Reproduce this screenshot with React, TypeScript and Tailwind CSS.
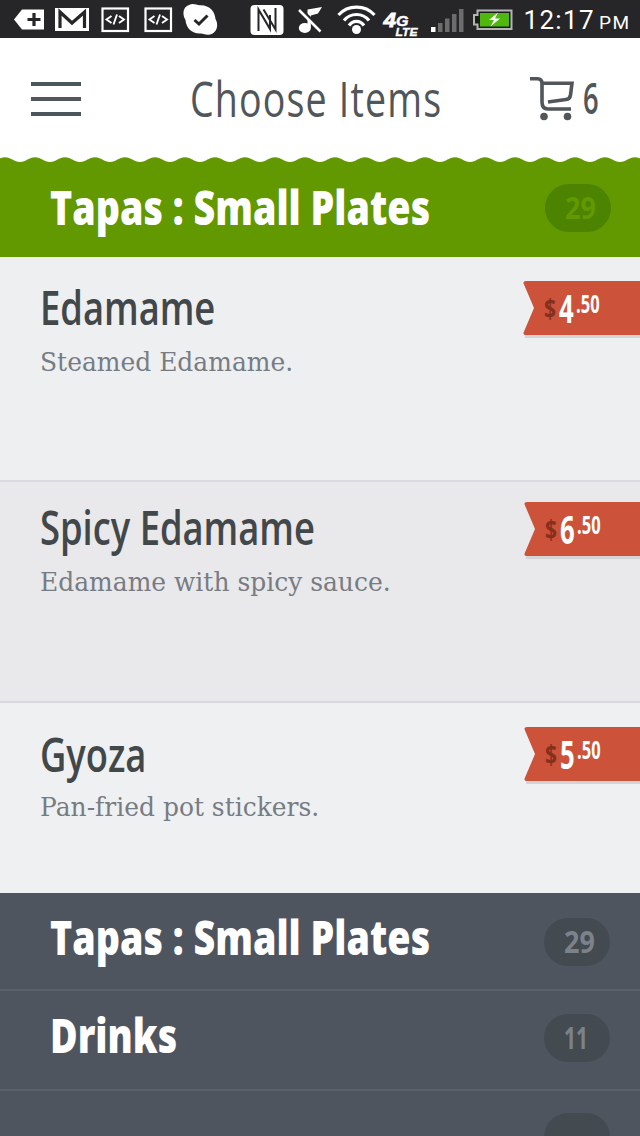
import React from "react";

const sans = "font-['Open_Sans','Noto_Sans',sans-serif]";

function StatusBar() {
  return (
    <div className="h-[38px] w-full shrink-0 bg-[#262527]">
      <svg width="640" height="38" viewBox="0 0 640 38" fill="#fff" className="block">
        <path d="M14 19.500L22 9.500H44V29.500H22Z" />
        <path d="M34 13V26M27.500 19.500H40.500" stroke="#262527" strokeWidth="3.200" />
        <rect x="55" y="8" width="34" height="23" />
        <path d="M60 28V12L72 23L84.500 12V28" fill="none" stroke="#262527" strokeWidth="3.200" />
        {[101.500, 144.500].map((x) => (
          <g key={x} transform={`translate(${x} 7.5)`} fill="none" stroke="#fff">
            <rect x="1" y="1" width="25.500" height="22.500" strokeWidth="2.200" />
            <path d="M10 8.500L5 12L10 15.500M17.500 8.500L22.500 12L17.500 15.500M15.500 7L12 17" strokeWidth="1.900" />
          </g>
        ))}
        <path d="M189 5C193 3 196 5 200 5.300C210 5 215 12 215.500 19C219 25 217 33 210 34.500C206 35.500 204 33.500 201 33.500C192 34 186 28 185.500 20C182 14 183 7 189 5Z" />
        <path d="M194.500 20L199 24L207.500 15.500" fill="none" stroke="#262527" strokeWidth="3" />
        <rect x="250.500" y="5" width="33" height="30" rx="4" />
        <path d="M258.500 31V9.500L270 29V15M275.500 8V29.500L263.500 9.500" fill="none" stroke="#262527" strokeWidth="2" />
        <ellipse cx="304.800" cy="28" rx="6" ry="5" />
        <path d="M307.500 27V9.500L322 7L318 13.500L310.800 15.500V28Z" />
        <path d="M301 9.500L323.500 31" stroke="#262527" strokeWidth="3" />
        <path d="M299 10L320.500 31.500" stroke="#fff" strokeWidth="2.500" />
        <g fill="none" stroke="#fff" strokeWidth="3.200">
          <path d="M338.500 15C348 4.500 365 4.500 374.500 15" />
          <path d="M344 20.500C350.500 12.500 362.500 12.500 369 20.500" />
          <path d="M349 25.500C353 20 360 20 364 25.500" />
        </g>
        <circle cx="356.500" cy="29.500" r="4.500" />
        <g fontFamily="Liberation Sans, sans-serif" fontWeight="700" fontStyle="italic" stroke="#fff">
          <text x="383.500" y="26.500" fontSize="20" strokeWidth="0.800" textLength="12.500" lengthAdjust="spacingAndGlyphs">4</text>
          <text x="396" y="26" fontSize="14.500" strokeWidth="0.500" textLength="12.500" lengthAdjust="spacingAndGlyphs">G</text>
          <text x="395.500" y="35.500" fontSize="10.500" strokeWidth="0.300" textLength="22" lengthAdjust="spacingAndGlyphs">LTE</text>
        </g>
        <rect x="431" y="27" width="4.500" height="5" />
        <g fill="#6d6c6d">
          <rect x="438" y="23" width="4.500" height="9" />
          <rect x="445" y="18.500" width="4.500" height="13.500" />
          <rect x="452" y="14" width="4.500" height="18" />
          <rect x="459" y="9" width="4.500" height="23" />
        </g>
        <path d="M477.500 10.500H511.500V29H477.500V24.500H474V15H477.500Z" fill="#1c1c1c" stroke="#b4b4b4" strokeWidth="2" />
        <rect x="480" y="13" width="29" height="13.500" fill="#4fb80e" />
        <path d="M498 12.500L489 20H494L490.500 26.500L500 18.500H495Z" />
        <g fontFamily="Roboto, sans-serif">
          <text x="523.500" y="29" fontSize="26" textLength="70" lengthAdjust="spacing">12:17</text>
          <text x="599" y="29" fontSize="19" textLength="30" lengthAdjust="spacing">PM</text>
        </g>
      </svg>
    </div>
  );
}

function Header() {
  return (
    <header className="flex h-[119px] w-full shrink-0 items-start bg-white text-[#50565a]">
      <div className="mt-[44px] ml-[31px] flex w-[50px] flex-col gap-[11px]">
        <span className="h-1 bg-[#4b565c]" />
        <span className="h-1 bg-[#50565a]" />
        <span className="h-1 bg-[#4b565c]" />
      </div>
      <h1 className={`${sans} mt-[36px] ml-[109px] w-[339px] origin-left scale-x-[0.767] text-[49px] leading-none tracking-[1.5px] whitespace-nowrap`}>
        Choose Items
      </h1>
      <svg width="48" height="48" viewBox="0 0 48 48" className="mt-[37px] shrink-0" fill="none" stroke="#50565a" strokeWidth="3.600">
        <path d="M1 3.800H8.500Q13 4 13 8.500V27Q13 34 19 34H42" />
        <path d="M13 8.200H43L41.500 20Q41 24 37 24.500L19 27" />
        <circle cx="15" cy="41.500" r="3.800" fill="#50565a" stroke="none" />
        <circle cx="38.500" cy="41.500" r="3.800" fill="#50565a" stroke="none" />
      </svg>
      <span className={`${sans} mt-[37px] ml-[6px] w-4 origin-left scale-x-[0.62] text-[44px] leading-none font-semibold`}>6</span>
    </header>
  );
}

function Wave() {
  return (
    <svg width="640" height="6" viewBox="0 0 640 6" className="absolute top-0 left-0">
      <defs>
        <pattern id="scallop" width="30" height="6" patternUnits="userSpaceOnUse" x="5">
          <path d="M0 0.300C6 0.300 9 5 15 5S24 0.300 30 0.300V0H0Z" fill="#fff" />
        </pattern>
      </defs>
      <rect width="640" height="6" fill="url(#scallop)" />
    </svg>
  );
}

type BandProps = { title: string; count: string; row: string; heading: string; badge: string; digits: string; wavy?: boolean };

function Band({ title, count, row, heading, badge, digits, wavy }: BandProps) {
  return (
    <div className={`relative flex w-full shrink-0 items-start overflow-hidden ${row}`}>
      {wavy && <Wave />}
      <h2 className={`${sans} ml-[50px] w-[494px] origin-left scale-x-[0.802] text-[47px] leading-none font-extrabold whitespace-nowrap text-white ${heading}`}>
        {title}
      </h2>
      <span className={`${sans} flex h-[48px] w-[66px] items-center rounded-[24px] pl-5 text-[30px] leading-none font-bold ${badge}`}>
        <span className={`block origin-left ${digits}`}>{count}</span>
      </span>
    </div>
  );
}

function PriceTag({ whole, cents }: { whole: string; cents: string }) {
  return (
    <div className="relative h-[58px] w-[117px]">
      <svg width="117" height="58" viewBox="0 0 117 58" className="absolute inset-0">
        <path d="M2 57H117V54H2Z" fill="#d5d5d7" />
        <path d="M3 0H117V54H3Q-0.500 54 0.800 51L11 27L0.800 3Q-0.500 0 3 0Z" fill="#cc523a" />
      </svg>
      <div className={`${sans} relative flex items-start leading-none font-bold text-white`}>
        <span className="mt-[13px] ml-[21px] w-[15px] origin-left scale-x-[0.78] text-[27px] leading-none text-[#85301f]">$</span>
        <span className="mt-[7px] w-[17px] origin-left scale-x-[0.66] text-[39px] leading-none">{whole}</span>
        <span className="mt-[10px] origin-left scale-x-[0.66] text-[25px] leading-none">{cents}</span>
      </div>
    </div>
  );
}

type DishProps = { name: string; text: string; whole: string; cents: string; row: string; title: string; desc: string; tag: string };

function Dish({ name, text, whole, cents, row, title, desc, tag }: DishProps) {
  return (
    <article className={`flex w-full shrink-0 items-start overflow-hidden ${row}`}>
      <div className="ml-[40px] w-[483px] shrink-0">
        <h3 className={`${sans} origin-left scale-x-[0.773] text-[47px] leading-none font-semibold whitespace-nowrap text-[#42474a] ${title}`}>{name}</h3>
        <p className={`origin-left scale-x-[0.96] font-['DejaVu_Serif',serif] text-[26px] leading-none whitespace-nowrap text-[#777c83] ${desc}`}>{text}</p>
      </div>
      <div className={`shrink-0 ${tag}`}>
        <PriceTag whole={whole} cents={cents} />
      </div>
    </article>
  );
}

export default function App() {
  return (
    <main className="flex h-[1136px] w-[640px] flex-col overflow-hidden bg-[#4f555f]">
      <StatusBar />
      <Header />
      <Band wavy title="Tapas : Small Plates" count="29" row="h-[100px] bg-[#629800]" heading="mt-[27px]" badge="mt-[27px] ml-px bg-[#4c8300] text-[#629800]" digits="scale-x-[0.9]" />
      <Dish name="Edamame" text="Steamed Edamame." whole="4" cents=".50" row="h-[225px] border-b-2 border-[#d9d9df] bg-[#eeeff1]" title="mt-[27px]" desc="mt-[18px]" tag="mt-[24px]" />
      <Dish name="Spicy Edamame" text="Edamame with spicy sauce." whole="6" cents=".50" row="h-[221px] border-b-2 border-[#d9d9df] bg-[#e9e8ea]" title="mt-[22px]" desc="mt-[18px]" tag="mt-[20px] ml-px" />
      <Dish name="Gyoza" text="Pan-fried pot stickers." whole="5" cents=".50" row="h-[190px] bg-[#eff0f2]" title="mt-[28px]" desc="mt-[16px]" tag="mt-[24px] ml-px" />
      <Band title="Tapas : Small Plates" count="29" row="h-[98px] border-b-2 border-[#5a616b] bg-[#4f555f]" heading="mt-[21px]" badge="mt-[25px] bg-[#434a50] text-[#7b828c]" digits="scale-x-[0.9]" />
      <Band title="Drinks" count="11" row="h-[100px] border-b-2 border-[#5a616b] bg-[#4f555f]" heading="mt-[21px]" badge="mt-[23px] bg-[#434a50] text-[#7b828c]" digits="scale-x-[0.7]" />
      <Band title="" count="" row="h-[98px] bg-[#4f555f]" heading="mt-[20px]" badge="mt-[22px] bg-[#434a50]" digits="" />
    </main>
  );
}
